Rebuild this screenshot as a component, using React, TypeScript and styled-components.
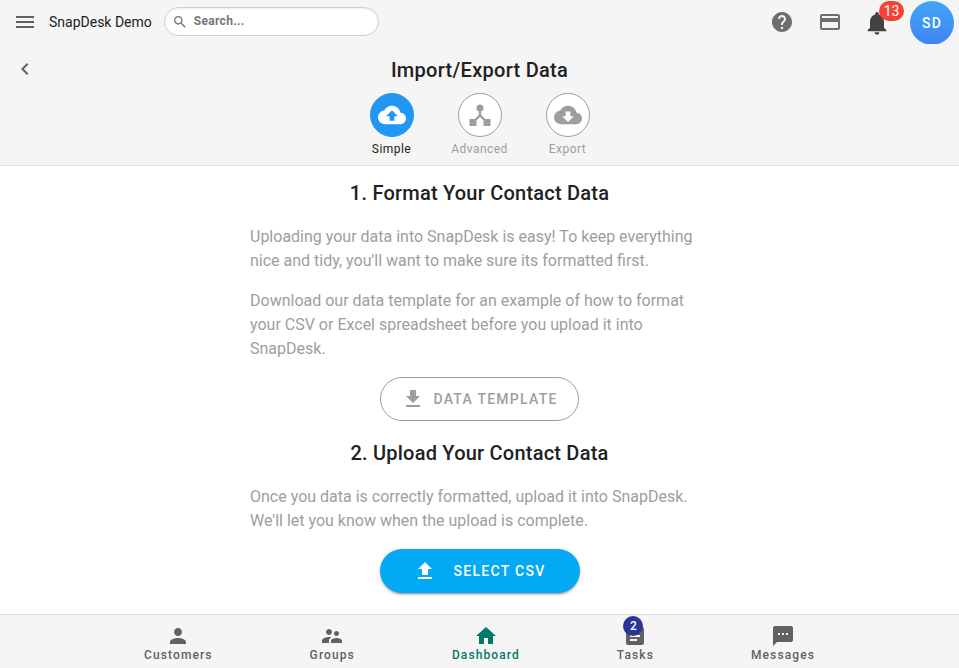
import { ReactNode } from 'react'
import styled, { createGlobalStyle } from 'styled-components'

const GlobalStyle = createGlobalStyle`
  html, body {
    margin: 0;
    padding: 0;
    height: 100%;
    background: #fff;
    overflow: hidden;
    font-family: Roboto, "Liberation Sans", sans-serif;
    text-rendering: optimizeLegibility;
    -webkit-font-smoothing: antialiased;
  }
  * { box-sizing: border-box; }
`

const paths = {
  menu: 'M3 18h18v-2H3v2zm0-5h18v-2H3v2zm0-7v2h18V6H3z',
  search:
    'M15.5 14h-.79l-.28-.27C15.41 12.59 16 11.11 16 9.5 16 5.91 13.09 3 9.5 3S3 5.91 3 9.5 5.91 16 9.5 16c1.61 0 3.09-.59 4.23-1.57l.27.28v.79l5 4.99L20.49 19l-4.99-5zm-6 0C7.01 14 5 11.99 5 9.5S7.01 5 9.5 5 14 7.01 14 9.5 11.99 14 9.5 14z',
  help: 'M12 2C6.48 2 2 6.48 2 12s4.48 10 10 10 10-4.48 10-10S17.52 2 12 2zm1 17h-2v-2h2v2zm2.07-7.75l-.9.92C13.45 12.9 13 13.5 13 15h-2v-.5c0-1.1.45-2.1 1.17-2.83l1.24-1.26c.37-.36.59-.86.59-1.41 0-1.1-.9-2-2-2s-2 .9-2 2H8c0-2.21 1.79-4 4-4s4 1.79 4 4c0 .88-.36 1.68-.93 2.25z',
  card: 'M20 4H4c-1.11 0-1.99.89-1.99 2L2 18c0 1.11.89 2 2 2h16c1.11 0 2-.89 2-2V6c0-1.11-.89-2-2-2zm0 14H4v-6h16v6zm0-10H4V6h16v2z',
  bell: 'M12 22c1.1 0 2-.9 2-2h-4c0 1.1.89 2 2 2zm6-6v-5c0-3.07-1.64-5.64-4.5-6.32V4c0-.83-.67-1.5-1.5-1.5s-1.5.67-1.5 1.5v.68C7.63 5.36 6 7.92 6 11v5l-2 2v1h16v-1l-2-2z',
  back: 'M15.41 7.41L14 6l-6 6 6 6 1.41-1.41L10.83 12z',
  cloudUp:
    'M19.35 10.04C18.67 6.59 15.64 4 12 4 9.11 4 6.6 5.64 5.35 8.04 2.34 8.36 0 10.91 0 14c0 3.31 2.69 6 6 6h13c2.76 0 5-2.24 5-5 0-2.64-2.05-4.78-4.65-4.96zM14 13v4h-4v-4H7l5-5 5 5h-3z',
  cloudDown:
    'M19.35 10.04C18.67 6.59 15.64 4 12 4 9.11 4 6.6 5.64 5.35 8.04 2.34 8.36 0 10.91 0 14c0 3.31 2.69 6 6 6h13c2.76 0 5-2.24 5-5 0-2.64-2.05-4.78-4.65-4.96zM17 13l-5 5-5-5h3V9h4v4h3z',
  fork: 'M12 1.5a3.5 3.5 0 0 1 1.2 6.8V12l4 4h5.3v7h-7v-5.5L12 14l-3.5 3.5V23h-7v-7h5.3l4-4V8.3A3.5 3.5 0 0 1 12 1.5z',
  fileDown: 'M19 9h-4V3H9v6H5l7 7 7-7zM5 18v2h14v-2H5z',
  fileUp: 'M9 16h6v-6h4l-7-7-7 7h4zm-4 2h14v2H5z',
  person:
    'M12 12c2.21 0 4-1.79 4-4s-1.79-4-4-4-4 1.79-4 4 1.79 4 4 4zm0 2c-2.67 0-8 1.34-8 4v2h16v-2c0-2.66-5.33-4-8-4z',
  groups:
    'M16.5 12c1.38 0 2.49-1.12 2.49-2.5S17.88 7 16.5 7C15.12 7 14 8.12 14 9.5s1.12 2.5 2.5 2.5zM9 11c1.66 0 2.99-1.34 2.99-3S10.66 5 9 5C7.34 5 6 6.34 6 8s1.34 3 3 3zm7.5 3c-1.83 0-5.5.92-5.5 2.75V19h11v-2.25c0-1.83-3.67-2.75-5.5-2.75zM9 13c-2.33 0-7 1.17-7 3.5V19h7v-2.25c0-.85.33-2.34 2.37-3.47C10.5 13.1 9.66 13 9 13z',
  home: 'M10 20v-6h4v6h5v-8h3L12 3 2 12h3v8z',
  tasks:
    'M19 3h-4.18C14.4 1.84 13.3 1 12 1c-1.3 0-2.4.84-2.82 2H5c-1.1 0-2 .9-2 2v14c0 1.1.9 2 2 2h14c1.1 0 2-.9 2-2V5c0-1.1-.9-2-2-2zm-7 0c.55 0 1 .45 1 1s-.45 1-1 1-1-.45-1-1 .45-1 1-1zm2 14H7v-2h7v2zm3-4H7v-2h10v2zm0-4H7V7h10v2z',
  messages:
    'M20 2H4c-1.1 0-1.99.9-1.99 2L2 22l4-4h14c1.1 0 2-.9 2-2V4c0-1.1-.9-2-2-2zM9 11H7V9h2v2zm4 0h-2V9h2v2zm4 0h-2V9h2v2z'
}

type IconName = keyof typeof paths

interface iconProps {
  name: IconName
  size?: number
  color?: string
}

function Icon({ name, size = 24, color = 'currentColor' }: iconProps) {
  return (
    <svg width={size} height={size} viewBox="0 0 24 24" fill={color} style={{ display: 'block' }}>
      <path d={paths[name]} />
    </svg>
  )
}

const steps: { label: string; icon: IconName; active?: boolean }[] = [
  { label: 'Simple', icon: 'cloudUp', active: true },
  { label: 'Advanced', icon: 'fork' },
  { label: 'Export', icon: 'cloudDown' }
]

const navItems: { label: string; icon: IconName; active?: boolean; badge?: string }[] = [
  { label: 'Customers', icon: 'person' },
  { label: 'Groups', icon: 'groups' },
  { label: 'Dashboard', icon: 'home', active: true },
  { label: 'Tasks', icon: 'tasks', badge: '2' },
  { label: 'Messages', icon: 'messages' }
]

function Section({ title, children }: { title: string; children: ReactNode }) {
  return (
    <>
      <SectionTitle>{title}</SectionTitle>
      {children}
    </>
  )
}

export default function App() {
  return (
    <Page>
      <GlobalStyle />
      <TopBar>
        <MenuButton>
          <Icon name="menu" color="#5f5f5f" />
        </MenuButton>
        <AppName>SnapDesk Demo</AppName>
        <SearchBox>
          <Icon name="search" size={16} color="#757575" />
          <SearchText>Search...</SearchText>
        </SearchBox>
        <TopActions>
          <ActionIcon>
            <Icon name="help" color="#6e6e6e" />
          </ActionIcon>
          <ActionIcon>
            <Icon name="card" color="#6e6e6e" />
          </ActionIcon>
          <BellIcon>
            <Icon name="bell" size={28} color="#424242" />
            <CountBadge>13</CountBadge>
          </BellIcon>
          <Avatar>SD</Avatar>
        </TopActions>
      </TopBar>

      <PageHeader>
        <BackButton>
          <Icon name="back" color="#616161" />
        </BackButton>
        <PageTitle>Import/Export Data</PageTitle>
        <Steps>
          {steps.map((step) => (
            <Step key={step.label}>
              <StepCircle $active={step.active}>
                <Icon name={step.icon} size={step.icon === 'fork' ? 24 : 28} color={step.active ? '#fff' : '#9e9e9e'} />
              </StepCircle>
              <StepLabel $active={step.active}>{step.label}</StepLabel>
            </Step>
          ))}
        </Steps>
      </PageHeader>

      <Main>
        <Section title="1. Format Your Contact Data">
          <Paragraph>
            Uploading your data into SnapDesk is easy! To keep everything nice and tidy, you'll want to make sure its
            formatted first.
          </Paragraph>
          <Paragraph>
            Download our data template for an example of how to format your CSV or Excel spreadsheet before you upload
            it into SnapDesk.
          </Paragraph>
          <OutlineButton>
            <Icon name="fileDown" color="#9e9e9e" />
            DATA TEMPLATE
          </OutlineButton>
        </Section>
        <Section title="2. Upload Your Contact Data">
          <Paragraph>
            Once you data is correctly formatted, upload it into SnapDesk. We'll let you know when the upload is
            complete.
          </Paragraph>
          <PrimaryButton>
            <Icon name="fileUp" color="#fff" />
            SELECT CSV
          </PrimaryButton>
        </Section>
      </Main>

      <BottomNav>
        {navItems.map((item) => (
          <NavItem key={item.label} $active={item.active}>
            <NavIcon>
              <Icon name={item.icon} />
              {item.badge && <NavBadge>{item.badge}</NavBadge>}
            </NavIcon>
            <NavLabel>{item.label}</NavLabel>
          </NavItem>
        ))}
      </BottomNav>
    </Page>
  )
}

const Page = styled.div`
  width: 959px;
  height: 668px;
  display: flex;
  flex-direction: column;
  overflow: hidden;
  background: #fff;
`
const TopBar = styled.header`
  height: 44px;
  flex: none;
  display: flex;
  align-items: center;
  padding-left: 13px;
  background: #f5f5f5;
`
const MenuButton = styled.div`
  width: 24px;
  height: 24px;
  margin-right: 12px;
`
const AppName = styled.span`
  font-size: 14px;
  line-height: 20px;
  color: #212121;
  margin-right: 12px;
  white-space: nowrap;
`
const SearchBox = styled.div`
  width: 215px;
  height: 29px;
  display: flex;
  align-items: center;
  gap: 6px;
  padding-left: 7px;
  margin-top: -1px;
  background: #fff;
  border: 1px solid #cfcfcf;
  border-radius: 15px;
  box-shadow: inset 0 1px 2px rgba(0, 0, 0, 0.08);
`
const SearchText = styled.span`
  font-size: 12px;
  font-weight: 700;
  letter-spacing: 0.3px;
  color: #757575;
  margin-top: -2px;
`
const TopActions = styled.div`
  margin-left: auto;
  display: flex;
  align-items: center;
  gap: 24px;
  padding-right: 5px;
`
const ActionIcon = styled.div`
  position: relative;
  width: 24px;
  height: 24px;
`
const BellIcon = styled(ActionIcon)`
  margin-left: -1px;
  svg {
    margin: -1px 0 0 -2px;
  }
`
const CountBadge = styled.span`
  position: absolute;
  left: 14px;
  top: -9px;
  width: 25px;
  height: 20px;
  border-radius: 10px;
  background: #f44336;
  color: #fff;
  font-size: 14px;
  line-height: 20px;
  text-align: center;
`
const Avatar = styled.div`
  width: 44px;
  height: 44px;
  margin: 1px 0 0 -3px;
  border-radius: 50%;
  background: linear-gradient(#42a5f5, #3f83f5);
  color: #fff;
  font-size: 14px;
  font-weight: 500;
  letter-spacing: 1.2px;
  line-height: 44px;
  text-align: center;
`
const PageHeader = styled.section`
  position: relative;
  flex: none;
  height: 122px;
  background: #f5f5f5;
  border-bottom: 1px solid #e0e0e0;
  display: flex;
  flex-direction: column;
  align-items: center;
`
const BackButton = styled.div`
  position: absolute;
  left: 13px;
  top: 13px;
`
const PageTitle = styled.h1`
  margin: 12px 0 0;
  font-size: 20px;
  line-height: 28px;
  font-weight: 500;
  letter-spacing: 0.28px;
  color: #212121;
`
const Steps = styled.div`
  display: flex;
  margin-top: 9px;
`
const Step = styled.div`
  width: 88px;
  display: flex;
  flex-direction: column;
  align-items: center;
  gap: 3px;
`
const StepCircle = styled.div<{ $active?: boolean }>`
  width: 44px;
  height: 44px;
  border-radius: 50%;
  display: flex;
  align-items: center;
  justify-content: center;
  background: ${(p) => (p.$active ? '#2196f3' : '#fff')};
  border: 1px solid ${(p) => (p.$active ? '#2196f3' : '#9e9e9e')};
`
const StepLabel = styled.span<{ $active?: boolean }>`
  font-size: 12px;
  line-height: 18px;
  letter-spacing: 0.45px;
  color: ${(p) => (p.$active ? '#212121' : '#9e9e9e')};
`
const Main = styled.main`
  flex: 1;
  min-height: 0;
  display: flex;
  flex-direction: column;
  align-items: center;
  padding-top: 12px;
`
const SectionTitle = styled.h2`
  margin: 0 0 17px;
  font-size: 20px;
  line-height: 30px;
  font-weight: 500;
  letter-spacing: 0.22px;
  color: #212121;
`
const Paragraph = styled.p`
  width: 459px;
  margin: 0 0 16px;
  font-size: 16px;
  line-height: 24px;
  color: #9e9e9e;
`
const OutlineButton = styled.div`
  width: 199px;
  height: 44px;
  margin-bottom: 17px;
  display: flex;
  align-items: center;
  justify-content: center;
  gap: 8px;
  border: 1px solid #9e9e9e;
  border-radius: 22px;
  font-size: 14px;
  font-weight: 500;
  letter-spacing: 1.25px;
  color: #9e9e9e;
`
const PrimaryButton = styled.div`
  width: 200px;
  height: 44px;
  display: flex;
  align-items: center;
  justify-content: center;
  gap: 16px;
  border-radius: 22px;
  background: #03a9f4;
  box-shadow: 0 3px 1px -2px rgba(0, 0, 0, 0.2), 0 2px 2px 0 rgba(0, 0, 0, 0.14), 0 1px 5px 0 rgba(0, 0, 0, 0.12);
  font-size: 14px;
  font-weight: 500;
  letter-spacing: 1.3px;
  color: #fff;
`
const BottomNav = styled.nav`
  flex: none;
  height: 54px;
  display: flex;
  justify-content: center;
  gap: 97px;
  background: #f5f5f5;
  border-top: 1px solid #e0e0e0;
`
const NavItem = styled.div<{ $active?: boolean }>`
  display: flex;
  flex-direction: column;
  align-items: center;
  padding-top: 9px;
  color: ${(p) => (p.$active ? '#00796b' : '#616161')};
`
const NavIcon = styled.div`
  position: relative;
  width: 24px;
  height: 24px;
`
const NavBadge = styled.span`
  position: absolute;
  left: 0;
  top: -8px;
  width: 20px;
  height: 20px;
  border-radius: 50%;
  background: #283593;
  color: #fff;
  font-size: 12px;
  font-weight: 500;
  line-height: 20px;
  text-align: center;
`
const NavLabel = styled.span`
  font-size: 12px;
  font-weight: 500;
  line-height: 14px;
  letter-spacing: 1.1px;
`
